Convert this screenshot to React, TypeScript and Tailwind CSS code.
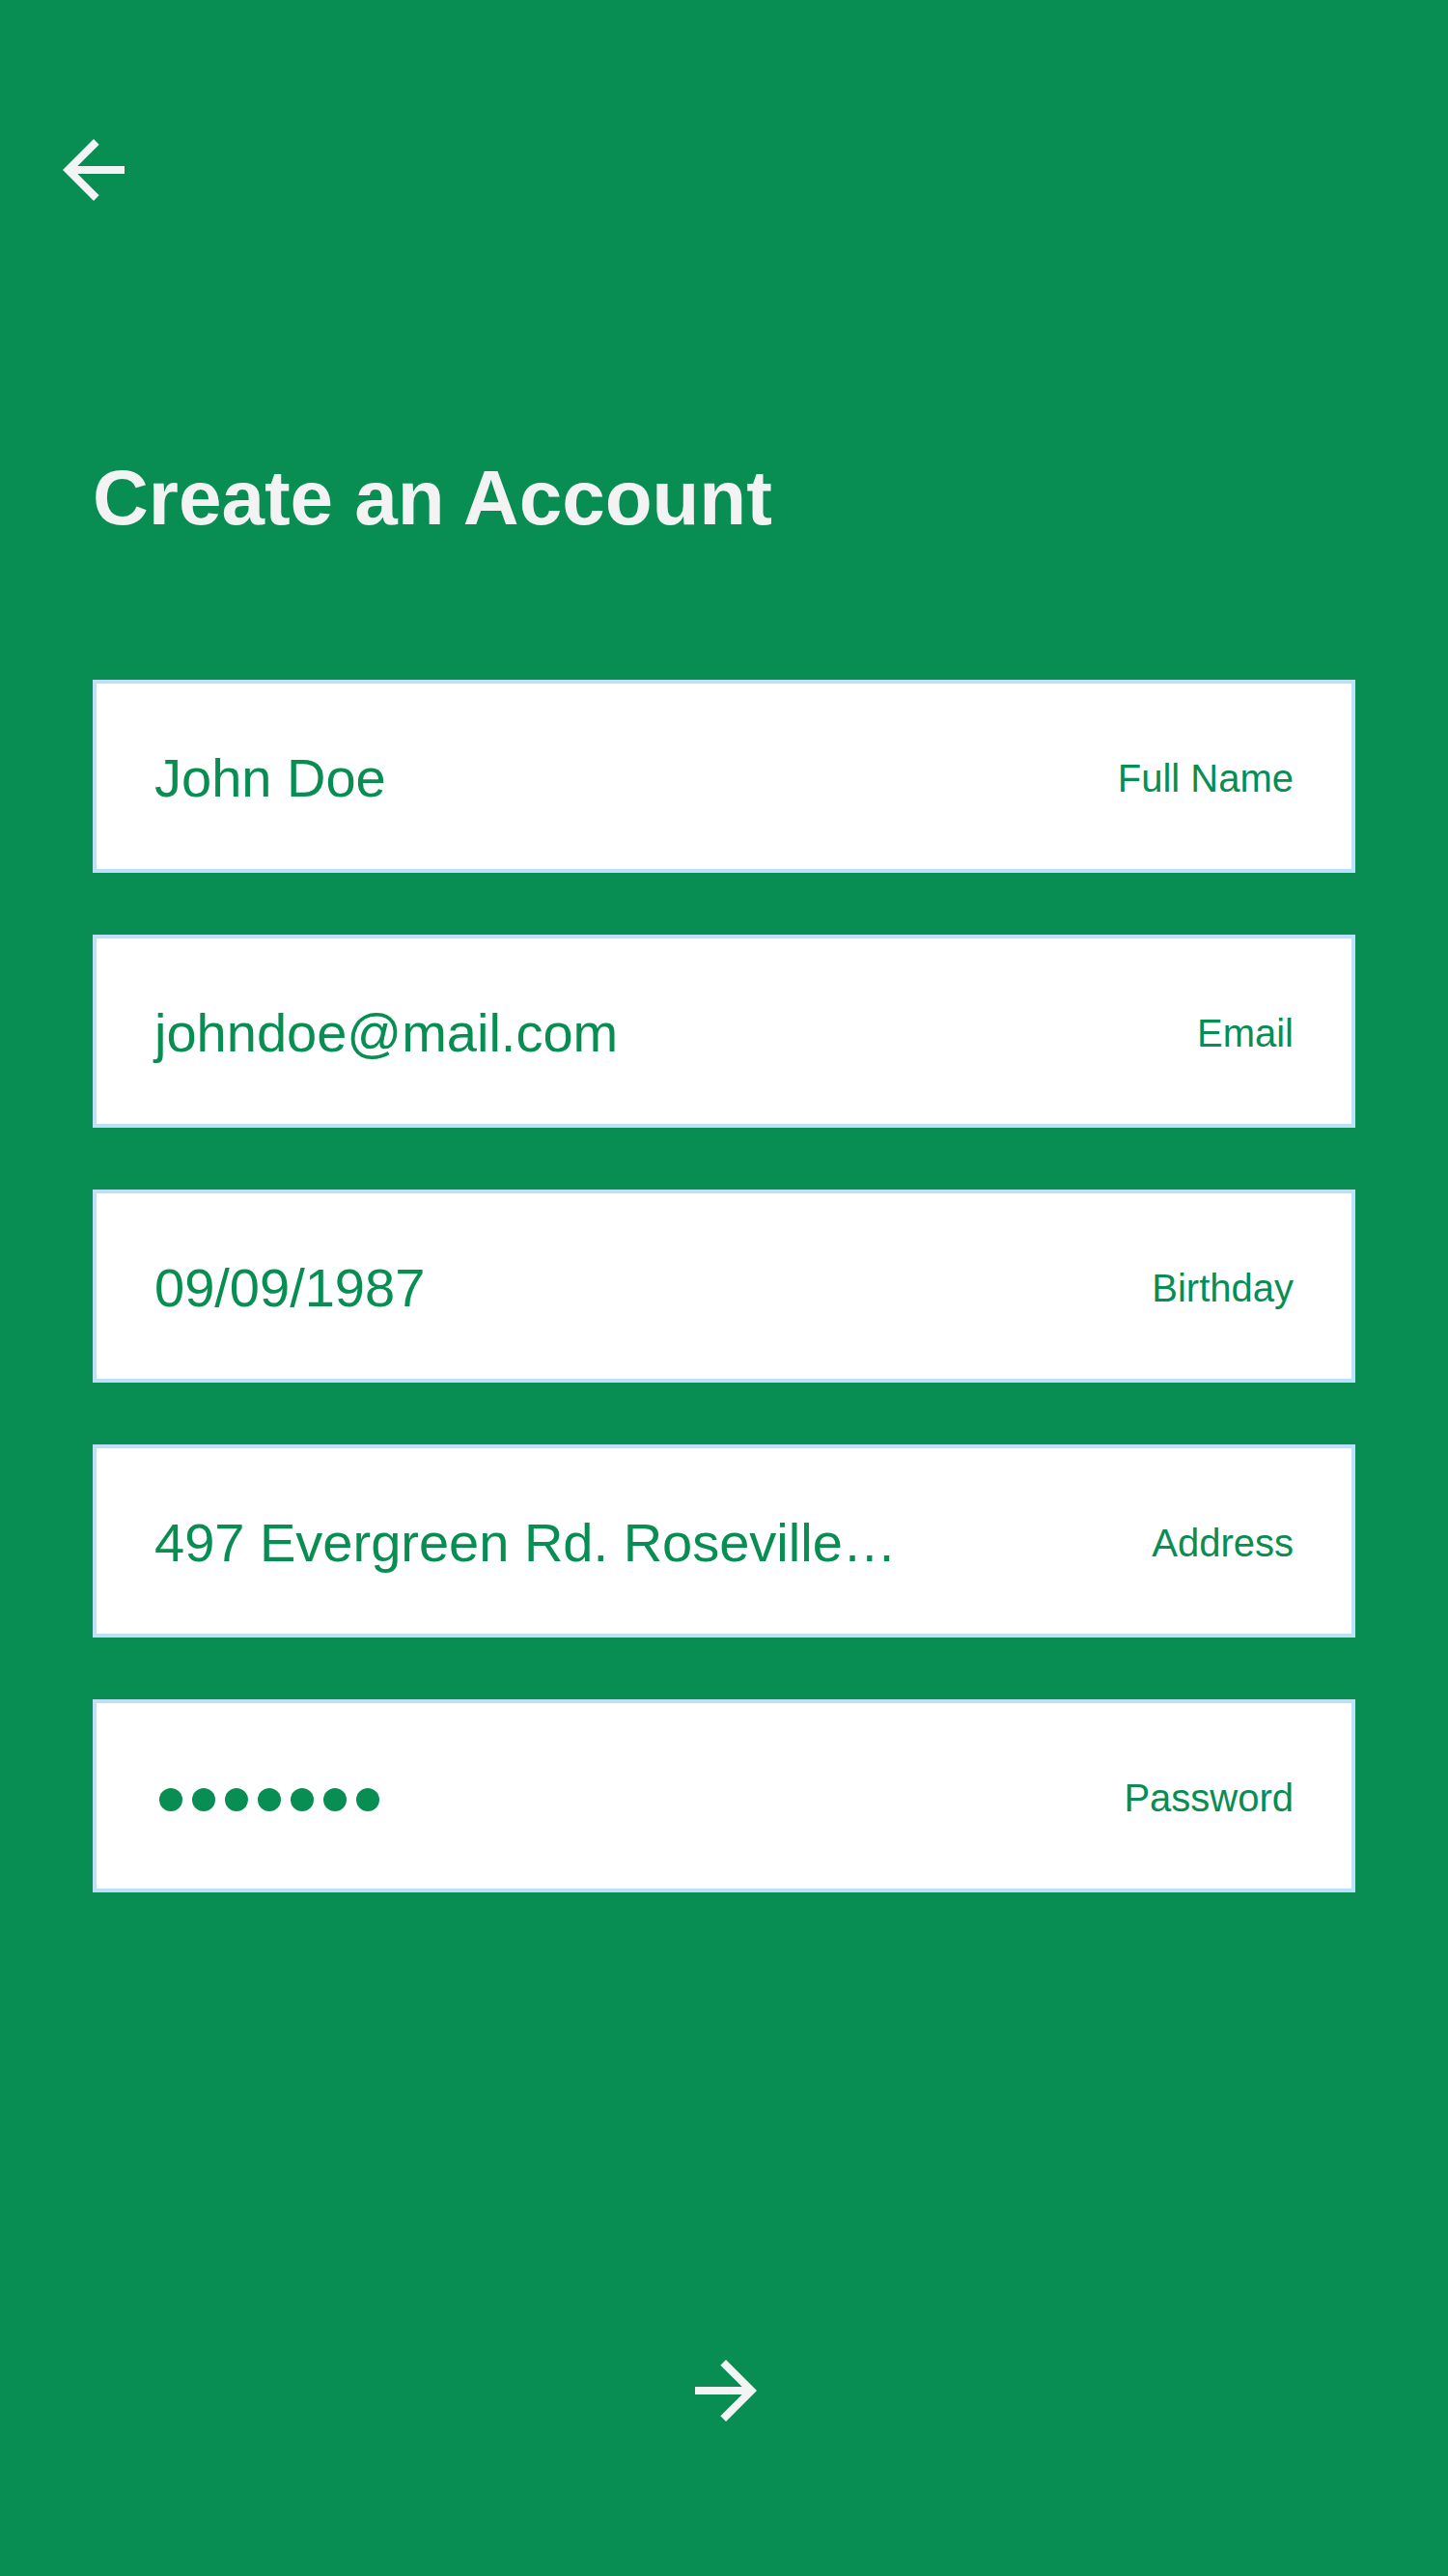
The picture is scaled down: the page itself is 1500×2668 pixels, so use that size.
import { ReactNode } from 'react';

interface FieldProps {
  label: string;
  children: ReactNode;
}

function ArrowBack() {
  return (
    <svg width="96" height="96" viewBox="0 0 24 24" fill="#f4f4f4">
      <path d="M20 11H7.83l5.59-5.59L12 4l-8 8 8 8 1.41-1.41L7.83 13H20v-2z" />
    </svg>
  );
}

function ArrowForward() {
  return (
    <svg width="96" height="96" viewBox="0 0 24 24" fill="#f4f4f4">
      <path d="M12 4l-1.41 1.41L16.17 11H4v2h12.17l-5.58 5.59L12 20l8-8z" />
    </svg>
  );
}

function Field({ label, children }: FieldProps) {
  return (
    <div className="h-[200px] bg-white border-[4px] border-[#bfe0fa] flex items-center justify-between px-[60px]">
      <div className="mt-[3px] text-[56px] leading-none text-[#088d53] whitespace-nowrap">{children}</div>
      <div className="mt-[3px] text-[40px] leading-none text-[#088d53] whitespace-nowrap">{label}</div>
    </div>
  );
}

export default function App() {
  return (
    <div
      className="min-h-[2668px] bg-[#088d53] flex flex-col"
      style={{ fontFamily: '"Liberation Sans", Arial, sans-serif' }}
    >
      {/* Header */}
      <div className="pt-[128px] pl-[49px]">
        <button className="block w-[96px] h-[96px]">
          <ArrowBack />
        </button>
      </div>

      <h1 className="mt-[252px] ml-[96px] text-[80px] leading-none font-bold text-[#f3f3f3]">
        Create an Account
      </h1>

      {/* Form */}
      <div className="mt-[148px] mx-[96px] flex flex-col gap-[64px]">
        <Field label="Full Name">John Doe</Field>
        <Field label="Email">johndoe@mail.com</Field>
        <Field label="Birthday">09/09/1987</Field>
        <Field label="Address">497 Evergreen Rd. Roseville…</Field>
        <Field label="Password">
          <div className="flex items-center gap-[10px] ml-[5px] mt-[5px]">
            {[0, 1, 2, 3, 4, 5, 6].map(i => (
              <span key={i} className="block w-[24px] h-[24px] rounded-full bg-[#088d53]" />
            ))}
          </div>
        </Field>
      </div>

      <div className="mt-[468px] flex justify-center pl-[4px]">
        <button className="block w-[96px] h-[96px]">
          <ArrowForward />
        </button>
      </div>
    </div>
  );
}
